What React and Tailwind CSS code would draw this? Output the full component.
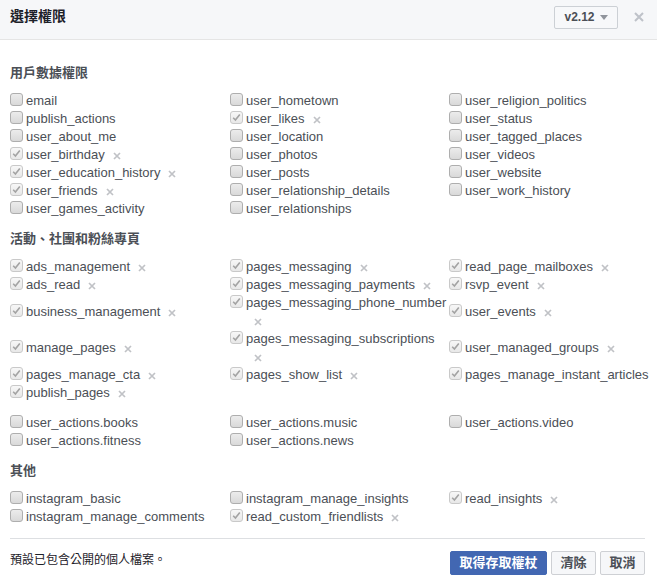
import React from 'react';

const FONT = { fontFamily: '"Liberation Sans", Arial, "Noto Sans CJK TC", sans-serif' };

// c = checked, x = removable
const userData = [
  ['email'], ['user_hometown'], ['user_religion_politics'],
  ['publish_actions'], ['user_likes', 1, 1], ['user_status'],
  ['user_about_me'], ['user_location'], ['user_tagged_places'],
  ['user_birthday', 1, 1], ['user_photos'], ['user_videos'],
  ['user_education_history', 1, 1], ['user_posts'], ['user_website'],
  ['user_friends', 1, 1], ['user_relationship_details'], ['user_work_history'],
  ['user_games_activity'], ['user_relationships'],
];

const pagesData = [
  ['ads_management', 1, 1], ['pages_messaging', 1, 1], ['read_page_mailboxes', 1, 1],
  ['ads_read', 1, 1], ['pages_messaging_payments', 1, 1], ['rsvp_event', 1, 1],
  ['business_management', 1, 1], ['pages_messaging_phone_number', 1, 1], ['user_events', 1, 1],
  ['manage_pages', 1, 1], ['pages_messaging_subscriptions', 1, 1], ['user_managed_groups', 1, 1],
  ['pages_manage_cta', 1, 1], ['pages_show_list', 1, 1], ['pages_manage_instant_articles', 1, 0],
  ['publish_pages', 1, 1],
];

const actionsData = [
  ['user_actions.books'], ['user_actions.music'], ['user_actions.video'],
  ['user_actions.fitness'], ['user_actions.news'],
];

const otherData = [
  ['instagram_basic'], ['instagram_manage_insights'], ['read_insights', 1, 1],
  ['instagram_manage_comments'], ['read_custom_friendlists', 1, 1],
];

const Checkbox = ({ checked }) =>
  checked ? (
    <div className="w-[13px] h-[13px] shrink-0 rounded-[3px] border border-[#c9c9c9] bg-gradient-to-b from-[#f7f7f7] to-[#e8e8e8] flex items-center justify-center">
      <svg width="9" height="9" viewBox="0 0 9 9">
        <path d="M1.2 4.8 L3.4 7 L7.8 1.4" fill="none" stroke="#a3a3a3" strokeWidth="1.6" />
      </svg>
    </div>
  ) : (
    <div className="w-[13px] h-[13px] shrink-0 rounded-[3px] border border-[#aeaeae] bg-gradient-to-b from-[#ececec] to-[#d9d9d9]" />
  );

const Remove = () => (
  <span className="inline-block ml-[8px] align-middle">
    <svg width="8" height="8" viewBox="0 0 8 8" className="block">
      <path d="M1 1 L7 7 M7 1 L1 7" stroke="#c0c2c6" strokeWidth="1.7" />
    </svg>
  </span>
);

const Item = ({ name, checked, removable }) => (
  <div className="flex items-start">
    <div className="pt-[1px]">
      <Checkbox checked={checked} />
    </div>
    <div className="ml-[3px] min-w-0">
      <span>{name}</span>
      {removable ? <Remove /> : null}
    </div>
  </div>
);

const Grid = ({ items }) => (
  <div className="grid grid-cols-[220px_219px_1fr] items-center leading-[18px] text-[13px] text-[#4b4f56]">
    {items.map(([name, c, x]) => (
      <Item key={name} name={name} checked={!!c} removable={!!x} />
    ))}
  </div>
);

const Heading = ({ children }) => (
  <div className="h-[18px] leading-[18px] text-[13px] font-bold text-[#4b4f56] mb-[10px]">{children}</div>
);

export default function App() {
  return (
    <div className="w-[657px] h-[579px] bg-white overflow-hidden" style={FONT}>
      <div className="h-[40px] bg-[#f6f7f9] border-b border-[#e5e5e5] flex items-center pl-[10px] pr-[13px]">
        <div className="text-[14px] font-bold text-[#1d2129] flex-1 -mt-[6px]">選擇權限</div>
        <div className="h-[23px] w-[64px] border border-[#ccd0d5] bg-[#f7f8fa] rounded-[2px] flex items-center justify-center gap-[5px] -mt-[5px]">
          <span className="text-[12px] font-bold text-[#4b4f56]">v2.12</span>
          <svg width="8" height="5" viewBox="0 0 8 5">
            <path d="M0 0 L8 0 L4 5 Z" fill="#90949c" />
          </svg>
        </div>
        <div className="ml-[16px] -mt-[6px]">
          <svg width="10" height="10" viewBox="0 0 10 10" className="block">
            <path d="M1 1 L9 9 M9 1 L1 9" stroke="#bec2c9" strokeWidth="2" />
          </svg>
        </div>
      </div>

      <div className="pl-[10px] pt-[24px]">
        <Heading>用戶數據權限</Heading>
        <Grid items={userData} />

        <div className="mt-[12px]">
          <Heading>活動、社團和粉絲專頁</Heading>
          <Grid items={pagesData} />
        </div>
        <div className="mt-[12px]">
          <Grid items={actionsData} />
        </div>

        <div className="mt-[12px]">
          <Heading>其他</Heading>
          <Grid items={otherData} />
        </div>
      </div>

      <div className="mt-[12px] ml-[10px] mr-[12px] border-t border-[#dddfe2]" />

      <div className="flex items-center pl-[10px] pr-[12px] pt-[12px]">
        <div className="flex-1 text-[12px] text-[#1d2129] -mt-[6px]">預設已包含公開的個人檔案。</div>
        <div className="flex gap-[4px]">
          <button className="h-[24px] w-[97px] rounded-[2px] border border-[#4267b2] bg-[#4267b2] text-white text-[13px] font-bold">
            取得存取權杖
          </button>
          <button className="h-[24px] w-[45px] rounded-[2px] border border-[#ced0d4] bg-[#f6f7f9] text-[#4b4f56] text-[13px] font-bold">
            清除
          </button>
          <button className="h-[24px] w-[45px] rounded-[2px] border border-[#ced0d4] bg-[#f6f7f9] text-[#4b4f56] text-[13px] font-bold">
            取消
          </button>
        </div>
      </div>
    </div>
  );
}
